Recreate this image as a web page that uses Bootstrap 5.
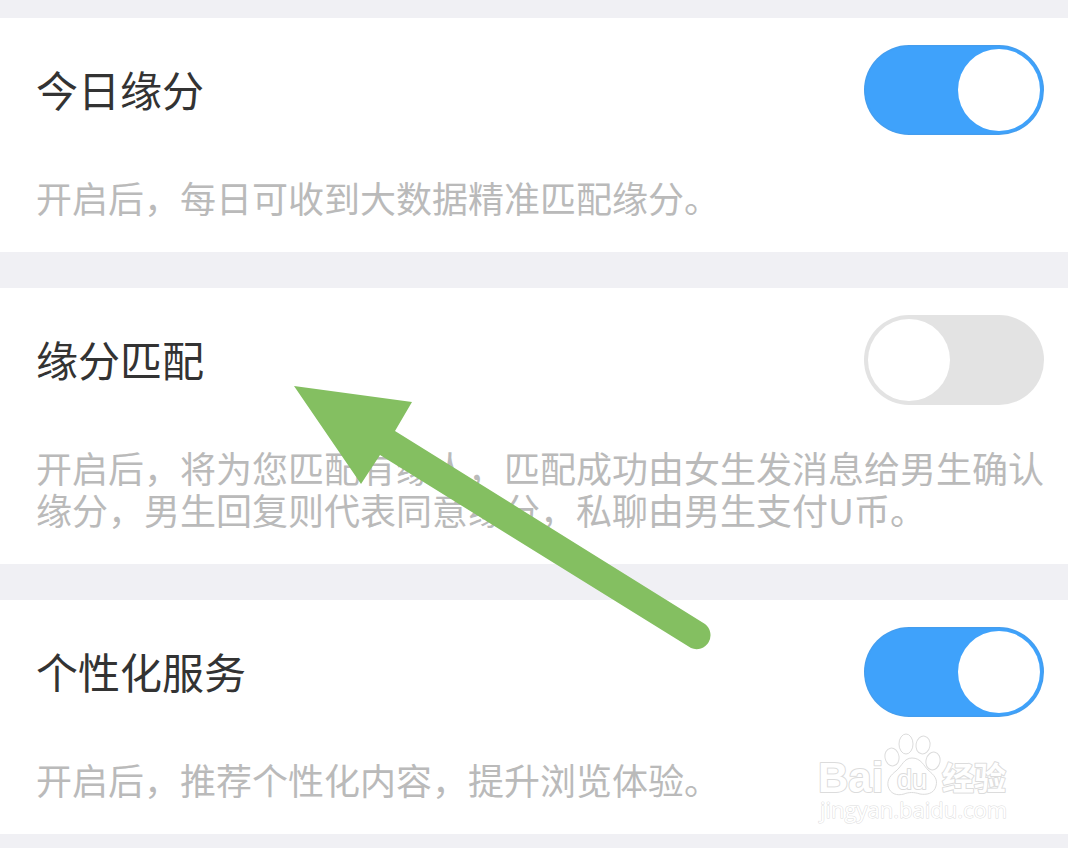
<!DOCTYPE html>
<html lang="zh-CN">
<head>
<meta charset="utf-8">
<meta name="viewport" content="width=device-width, initial-scale=1">
<title>缘分设置</title>
<link href="https://cdn.jsdelivr.net/npm/bootstrap@5.3.0/dist/css/bootstrap.min.css" rel="stylesheet">
<style>
  body {
    background: #f0f0f4;
    color: #333;
    font-family: "Noto Sans CJK SC", sans-serif;
  }
  .settings { gap: 36px; padding: 18px 0 14px; }
  .setting { padding: 27px 24px 34px 36px; }
  .setting-title { font-size: 42px; line-height: 60px; font-weight: 400; padding-bottom: 3px; }
  .setting-desc { font-size: 36px; line-height: 42px; color: #bababa; margin-top: 41px; }
  .setting .form-check-input,
  .setting .form-check-input:checked {
    --knob: url("data:image/svg+xml,%3csvg xmlns='http://www.w3.org/2000/svg' viewBox='0 0 90 90'%3e%3ccircle cx='45' cy='45' r='41' fill='%23fff'/%3e%3c/svg%3e");
    width: 180px;
    height: 90px;
    margin: 0;
    border: 0;
    border-radius: 45px;
    background-color: #e3e3e3;
    background-size: 90px 90px;
    background-image: var(--knob);
  }
  .setting .form-check-input:checked {
    background-color: #3fa2fb;
    box-shadow: inset 0 0 2px #5590c8;
  }
  .pointer { left: 27.5%; top: 98px; z-index: 2; pointer-events: none; }
  .watermark { right: 54px; bottom: 6px; pointer-events: none; }
  .watermark text { paint-order: stroke; stroke-linejoin: round; }
</style>
</head>
<body>
<main class="settings d-flex flex-column">
  <section class="setting bg-white">
    <div class="form-switch p-0 m-0 d-flex align-items-center justify-content-between">
      <label class="setting-title" for="today">今日缘分</label>
      <input class="form-check-input float-none flex-shrink-0" type="checkbox" role="switch" id="today" checked>
    </div>
    <p class="setting-desc mb-0">开启后，每日可收到大数据精准匹配缘分。</p>
  </section>

  <section class="setting bg-white position-relative">
    <div class="form-switch p-0 m-0 d-flex align-items-center justify-content-between">
      <label class="setting-title" for="match">缘分匹配</label>
      <input class="form-check-input float-none flex-shrink-0" type="checkbox" role="switch" id="match">
    </div>
    <p class="setting-desc mb-0">开启后，将为您匹配有缘人，匹配成功由女生发消息给男生确认缘分，男生回复则代表同意缘分，私聊由男生支付U币。</p>
    <svg class="pointer position-absolute" width="420" height="268" viewBox="0 0 420 268" aria-hidden="true">
      <path fill="#84bf61" d="M0 0 118 16 101 45 411 238A14 14 0 0 1 397 262L86 69 67 98Z"/>
    </svg>
  </section>

  <section class="setting bg-white position-relative">
    <div class="form-switch p-0 m-0 d-flex align-items-center justify-content-between">
      <label class="setting-title" for="personal">个性化服务</label>
      <input class="form-check-input float-none flex-shrink-0" type="checkbox" role="switch" id="personal" checked>
    </div>
    <p class="setting-desc mb-0">开启后，推荐个性化内容，提升浏览体验。</p>
    <svg class="watermark position-absolute" width="198" height="98" viewBox="0 0 198 98" fill="#fff" stroke="#dcdcdc" stroke-width="2">
      <text x="2" y="62" font-family="Liberation Sans" font-weight="700" font-size="42">Bai</text>
      <ellipse cx="76" cy="27" rx="7" ry="9" transform="rotate(-10 76 27)" stroke-width="1"/>
      <ellipse cx="90" cy="14" rx="7" ry="10" stroke-width="1"/>
      <ellipse cx="107" cy="15" rx="7" ry="9" transform="rotate(10 107 15)" stroke-width="1"/>
      <ellipse cx="117" cy="31" rx="7" ry="9" transform="rotate(12 117 31)" stroke-width="1"/>
      <path stroke-width="1" d="M96 28C105 28 108 36 112 40C118 45 122 49 120 56C118 64 110 65 104 64C98 62 93 62 88 64C81 66 74 64 72 56C71 49 75 45 80 41C86 36 88 28 96 28Z"/>
      <text x="81" y="59" font-family="Liberation Sans" font-size="27">du</text>
      <text x="126" y="60" font-family="Noto Sans CJK SC" font-weight="700" font-size="32">经验</text>
      <text x="4" y="88" font-family="Open Sans" font-size="22" stroke-width="1">jingyan.baidu.com</text>
    </svg>
  </section>
</main>
<script src="https://cdn.jsdelivr.net/npm/bootstrap@5.3.0/dist/js/bootstrap.bundle.min.js"></script>
</body>
</html>
